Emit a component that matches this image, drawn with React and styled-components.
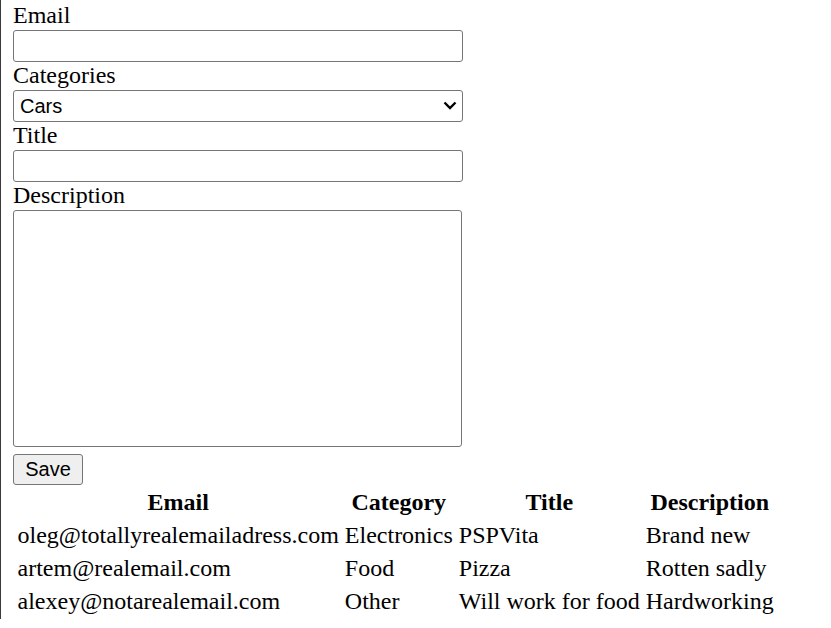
import React, { useState } from "react"
import styled, { createGlobalStyle } from "styled-components"

const GlobalStyle = createGlobalStyle`
html {
  border-left: 1px solid #3a3a3a;
  background: #fff;
}
body {
  margin: 1px 0 0 12px;
  font-family: "Liberation Serif", "Times New Roman", serif;
  font-size: 24px;
  color: #000;
}
`

const Form = styled.form`
display: flex;
flex-direction: column;
align-items: flex-start;
width: 450px;
padding-top: 1px;
`

const Label = styled.label`
display: block;
line-height: 28px;
height: 28px;
margin-top: -1px;
margin-bottom: 1px;
`

const fieldBase = `
box-sizing: border-box;
width: 450px;
border: 1px solid #767676;
border-radius: 3px;
background: #fff;
font-family: "Liberation Sans", Arial, sans-serif;
font-size: 20px;
color: #000;
margin: 0;
`

const TextInput = styled.input`
${fieldBase}
height: 32px;
padding: 1px 3px;
`

const SelectWrap = styled.div`
position: relative;
width: 450px;
height: 32px;
`

const Select = styled.select`
${fieldBase}
appearance: none;
height: 32px;
padding: 0 30px 0 6px;
`

const Chevron = styled.svg`
position: absolute;
right: 6px;
top: 11px;
pointer-events: none;
`

const TextArea = styled.textarea`
${fieldBase}
display: block;
width: 449px;
height: 237px;
padding: 3px;
resize: none;
`

const SaveButton = styled.button`
box-sizing: border-box;
width: 70px;
height: 31px;
margin-top: 7px;
padding: 0;
border: 1px solid #767676;
border-radius: 3px;
background: #efefef;
font-family: "Liberation Sans", Arial, sans-serif;
font-size: 20px;
color: #000;
`

const Table = styled.table`
border-collapse: separate;
border-spacing: 3px;
margin-top: -1px;
font-size: 24px;
line-height: 27px;
`

const HeadCell = styled.th`
padding: 1.5px;
font-weight: bold;
text-align: center;
white-space: nowrap;
`

const Cell = styled.td`
padding: 1.5px;
text-align: left;
white-space: nowrap;
`

const posts = [
  { email: "oleg@totallyrealemailadress.com", category: "Electronics", title: "PSPVita", description: "Brand new" },
  { email: "artem@realemail.com", category: "Food", title: "Pizza", description: "Rotten sadly" },
  { email: "alexey@notarealemail.com", category: "Other", title: "Will work for food", description: "Hardworking" },
]

export default function App() {
  const [category, setCategory] = useState("Cars")

  return (
    <>
      <GlobalStyle />
      <Form onSubmit={(e) => e.preventDefault()}>
        <Label htmlFor="email">Email</Label>
        <TextInput id="email" type="text" />
        <Label htmlFor="category">Categories</Label>
        <SelectWrap>
          <Select id="category" value={category} onChange={(e) => setCategory(e.target.value)}>
            <option>Cars</option>
            <option>Electronics</option>
            <option>Food</option>
            <option>Other</option>
          </Select>
          <Chevron width="14" height="9" viewBox="0 0 14 9">
            <path d="M1.5 1.5 L7 7 L12.5 1.5" fill="none" stroke="#000" strokeWidth="2.4" />
          </Chevron>
        </SelectWrap>
        <Label htmlFor="title">Title</Label>
        <TextInput id="title" type="text" />
        <Label htmlFor="description">Description</Label>
        <TextArea id="description" />
        <SaveButton type="submit">Save</SaveButton>
      </Form>
      <Table>
        <thead>
          <tr>
            <HeadCell>Email</HeadCell>
            <HeadCell>Category</HeadCell>
            <HeadCell>Title</HeadCell>
            <HeadCell>Description</HeadCell>
          </tr>
        </thead>
        <tbody>
          {posts.map((p) => (
            <tr key={p.email}>
              <Cell>{p.email}</Cell>
              <Cell>{p.category}</Cell>
              <Cell>{p.title}</Cell>
              <Cell>{p.description}</Cell>
            </tr>
          ))}
        </tbody>
      </Table>
    </>
  )
}
